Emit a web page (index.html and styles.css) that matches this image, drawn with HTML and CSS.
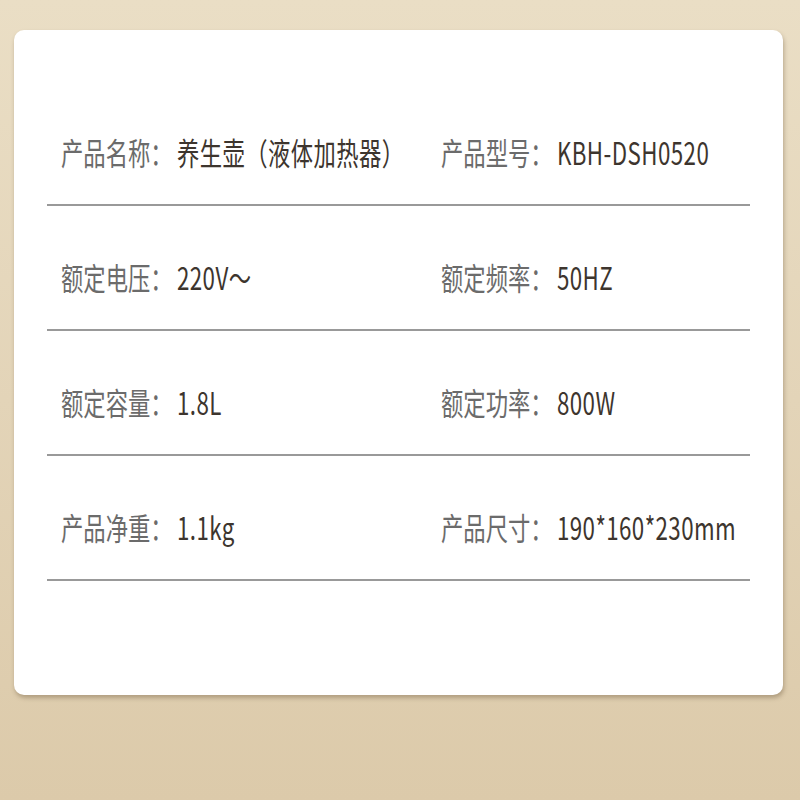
FILE: index.html
```html
<!DOCTYPE html>
<html lang="zh-CN">
<head>
<meta charset="utf-8">
<title>产品参数</title>
<link rel="stylesheet" href="styles.css">
</head>
<body>
<div class="page">
  <div class="card">
    <div class="row">
      <div class="cell"><span class="label">产品名称：</span><span class="value">养生壶（液体加热器）</span></div>
      <div class="cell"><span class="label">产品型号：</span><span class="value">KBH-DSH0520</span></div>
    </div>
    <div class="row">
      <div class="cell"><span class="label">额定电压：</span><span class="value">220V～</span></div>
      <div class="cell"><span class="label">额定频率：</span><span class="value">50HZ</span></div>
    </div>
    <div class="row">
      <div class="cell"><span class="label">额定容量：</span><span class="value">1.8L</span></div>
      <div class="cell"><span class="label">额定功率：</span><span class="value">800W</span></div>
    </div>
    <div class="row">
      <div class="cell"><span class="label">产品净重：</span><span class="value">1.1kg</span></div>
      <div class="cell"><span class="label">产品尺寸：</span><span class="value">190*160*230mm</span></div>
    </div>
  </div>
</div>
</body>
</html>
```

FILE: styles.css
```css
html, body {
  margin: 0;
  padding: 0;
}
body {
  width: 800px;
  height: 800px;
  background: linear-gradient(180deg, #eadec5 0%, #e3d4b8 50%, #dccaaa 100%);
  font-family: "Noto Sans CJK SC", "Noto Sans", sans-serif;
  overflow: hidden;
}
.page {
  padding: 30px 17px 0 14px;
}
.card {
  height: 665px;
  box-sizing: border-box;
  background: #ffffff;
  border-radius: 10px;
  box-shadow: 1px 3px 4px rgba(120, 100, 70, 0.45);
  padding: 51px 33px 0 33px;
}
.row {
  display: grid;
  grid-template-columns: 380px 1fr;
  padding: 51px 0 32px 14px;
  border-bottom: 2px solid #999999;
}
.cell {
  height: 40px;
  line-height: 40px;
  font-size: 31px;
  white-space: nowrap;
  transform: scaleX(0.72);
  transform-origin: left center;
}
.label {
  color: #6b6b6b;
}
.value {
  color: #3d352e;
  margin-left: 6px;
  letter-spacing: 0.6px;
}
```
